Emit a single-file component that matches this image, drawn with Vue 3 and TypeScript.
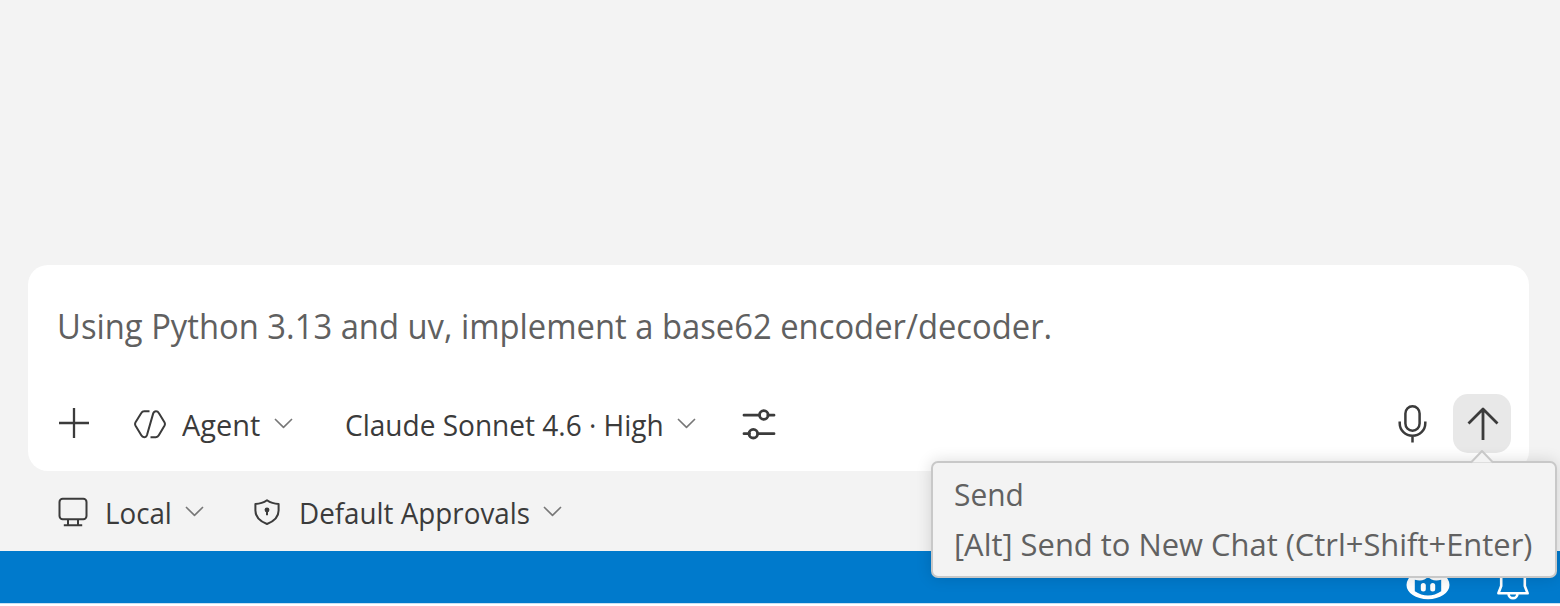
<script setup lang="ts">
const prompt: string = 'Using Python 3.13 and uv, implement a base62 encoder/decoder.'
const chevron: string = 'M1 1 L9.5 9.4 L18 1'
</script>

<template>
  <div class="window">
    <main class="chat">
      <section class="composer">
        <div class="prompt"><span>{{ prompt }}</span></div>
        <div class="toolbar">
          <svg class="plus" width="32" height="32" viewBox="0 0 32 32"><path d="M16 0V30M1 15H31" /></svg>
          <svg class="agent-icon" width="34" height="32" viewBox="0 0 34 32">
            <path d="M16.5 3.2H11.2Q9.3 3.2 8.3 5L2.4 14.5Q1.6 16 2.4 17.5L8.3 27.3Q9.3 29.2 11.2 29.2Q13.3 29.2 14 27L20.2 5.4Q20.9 3.2 23 3.2Q24.8 3.2 25.8 5L31.6 14.5Q32.4 16 31.6 17.5L25.8 27.3Q24.8 29.2 22.8 29.2H17.5" />
          </svg>
          <span class="label agent"><span>Agent</span></span>
          <svg class="chevron" width="19" height="11" viewBox="0 0 19 11"><path :d="chevron" /></svg>
          <span class="label model"><span>Claude Sonnet 4.6 · High</span></span>
          <svg class="chevron" width="19" height="11" viewBox="0 0 19 11"><path :d="chevron" /></svg>
          <svg class="sliders" width="34" height="32" viewBox="0 0 34 32">
            <path d="M2 7.2H17.5M26 7.2H32M2 25.7H7.5M16 25.7H32" />
            <circle cx="21.8" cy="7" r="4.3" /><circle cx="11.3" cy="25.7" r="4.3" />
          </svg>
          <svg class="mic" width="30" height="40" viewBox="0 0 30 40">
            <rect x="7.4" y="2.3" width="14.2" height="24.4" rx="7.1" />
            <path d="M1.7 17.5V19.2A12.6 12.4 0 0 0 27.3 19.2V17.5M14.5 32V38.5" />
          </svg>
          <button class="send" aria-label="Send">
            <svg width="34" height="36" viewBox="0 0 34 36"><path d="M17 34V3M2.5 17.5L17 3L31.5 17.5" /></svg>
          </button>
        </div>
      </section>
      <div class="session">
        <svg class="monitor" width="30" height="30" viewBox="0 0 30 30">
          <rect x="1.5" y="1.8" width="27" height="20.4" rx="3.2" />
          <path d="M10 22.5V27.8M20 22.5V27.8M5.8 28.3H24.2" />
        </svg>
        <span class="label local"><span>Local</span></span>
        <svg class="chevron" width="19" height="11" viewBox="0 0 19 11"><path :d="chevron" /></svg>
        <svg class="shield" width="28" height="28" viewBox="0 0 28 28">
          <path d="M14 2.2Q19 5.8 25.6 5.9V12.5Q25.6 21.5 14 26Q2.4 21.5 2.4 12.5V5.9Q9 5.8 14 2.2Z" />
          <circle cx="14" cy="12" r="2.4" /><path d="M14 12V17.3" />
        </svg>
        <span class="label approvals"><span>Default Approvals</span></span>
        <svg class="chevron" width="19" height="11" viewBox="0 0 19 11"><path :d="chevron" /></svg>
      </div>
    </main>
    <footer class="status">
      <svg class="copilot" width="44" height="40" viewBox="0 0 44 40">
        <path fill="#fff" fill-rule="evenodd" d="M7 14V8Q7 1 15 1Q20 1 22 4Q24 1 29 1Q37 1 37 8V14Q43.5 19 43.5 25C43.5 33 34 39.2 22 39.2S.5 33 .5 25Q.5 19 7 14ZM8.8 19.8V31.3Q15 35.5 22 35.5T35.2 31.3V19.8Q26 22 22 16.5Q18 22 8.8 19.8Z" />
        <rect x="14.8" y="23" width="5" height="8.5" rx="2.5" fill="#fff" /><rect x="24.2" y="23" width="5" height="8.5" rx="2.5" fill="#fff" />
      </svg>
      <svg class="bell" width="34" height="40" viewBox="0 0 34 40">
        <path d="M5.2 15C5.2 7 10 2 17 2S28.8 7 28.8 15V26L31.6 33.3H2.4L5.2 26ZM12.5 33.5C12.5 39.7 21.5 39.7 21.5 33.5" />
      </svg>
    </footer>
    <aside class="tooltip">
      <svg class="pointer" width="24" height="15" viewBox="0 0 24 15"><path d="M1 13.5L12 2L23 13.5" /></svg>
      <div><span class="tip-one">Send</span></div>
      <div><span class="tip-two">[Alt] Send to New Chat (Ctrl+Shift+Enter)</span></div>
    </aside>
  </div>
</template>

<style>
body { margin: 0; background: #fff; overflow: hidden; }
</style>
<style scoped>
* { box-sizing: border-box; }
.window {
  position: relative; width: 1560px; height: 606px; overflow: hidden;
  font-family: "Open Sans", "Noto Sans", sans-serif; color: #3b3b3b;
}
.chat { height: 551px; padding: 265px 31px 0 28px; background: #f3f3f3; }
.composer { height: 206px; background: #fff; border-radius: 20px; padding: 31px 18px 0 28px; }
.prompt { height: 60px; padding-left: 1px; line-height: 60px; font-size: 35px; color: #606060; white-space: nowrap; }
.prompt span, .label span, .tooltip span { display: inline-block; transform-origin: left center; }
.prompt span { transform: scaleX(.936); }
.toolbar { display: flex; align-items: center; height: 60px; margin-top: 38px; }
svg { display: block; flex: none; fill: none; stroke: #3b3b3b; stroke-width: 2.3; stroke-linecap: butt; stroke-linejoin: round; }
.plus { margin-left: 2px; }
.agent-icon { margin-left: 43px; stroke-width: 2; }
.label { flex: none; white-space: nowrap; font-size: 29.5px; line-height: 40px; margin-top: 1px; }
.agent { width: 78px; margin-left: 15px; }
.agent span { transform: scaleX(.98); }
.chevron { margin: -2px 0 0 14px; stroke: #777; stroke-width: 1.6; }
.model { width: 318px; margin-left: 52px; }
.model span { transform: scaleX(.95); }
.sliders { margin-left: 46px; stroke-width: 2.8; stroke-linecap: round; }
.mic { margin-left: auto; stroke-width: 2.5; }
.send { display: flex; align-items: center; justify-content: center; width: 58px; height: 59px; margin: -1px 0 0 25px; padding: 0; border: 0; border-radius: 15px; background: #e8e8e8; }
.send svg { margin-left: 2px; stroke-width: 2.8; }
.session { display: flex; align-items: center; height: 60px; margin-top: 11px; padding-left: 30px; }
.monitor { stroke-width: 2; margin-top: -1px; }
.local { width: 66px; margin-left: 17px; }
.local span { transform: scaleX(.94); }
.shield { margin: -1px 0 0 49px; stroke-width: 2; }
.shield circle { fill: #3b3b3b; stroke: none; }
.approvals { width: 230px; margin-left: 18px; }
.approvals span { transform: scaleX(.942); }
.status { display: flex; justify-content: flex-end; height: 52px; padding: 9px 30px 0 0; background: #007acc; box-shadow: 0 1px #c8e0f2; }
.copilot { stroke: none; }
.bell { margin-left: 46px; stroke: #fff; stroke-width: 2.6; }
.tooltip {
  position: absolute; left: 931px; top: 461px; width: 626px; height: 117px;
  border: 2px solid #c8c8c8; border-radius: 7px; background: #f3f3f3;
  padding: 6px 21px; color: #616161; font-size: 31px; line-height: 50px; white-space: nowrap;
  box-shadow: 0 0 16px rgba(0, 0, 0, .14);
}
.tooltip .tip-one { transform: scaleX(.965); }
.tooltip .tip-two { transform: scaleX(.997); }
.pointer { position: absolute; left: 537px; top: -14px; stroke: #c8c8c8; stroke-width: 2; fill: #f3f3f3; }
</style>
